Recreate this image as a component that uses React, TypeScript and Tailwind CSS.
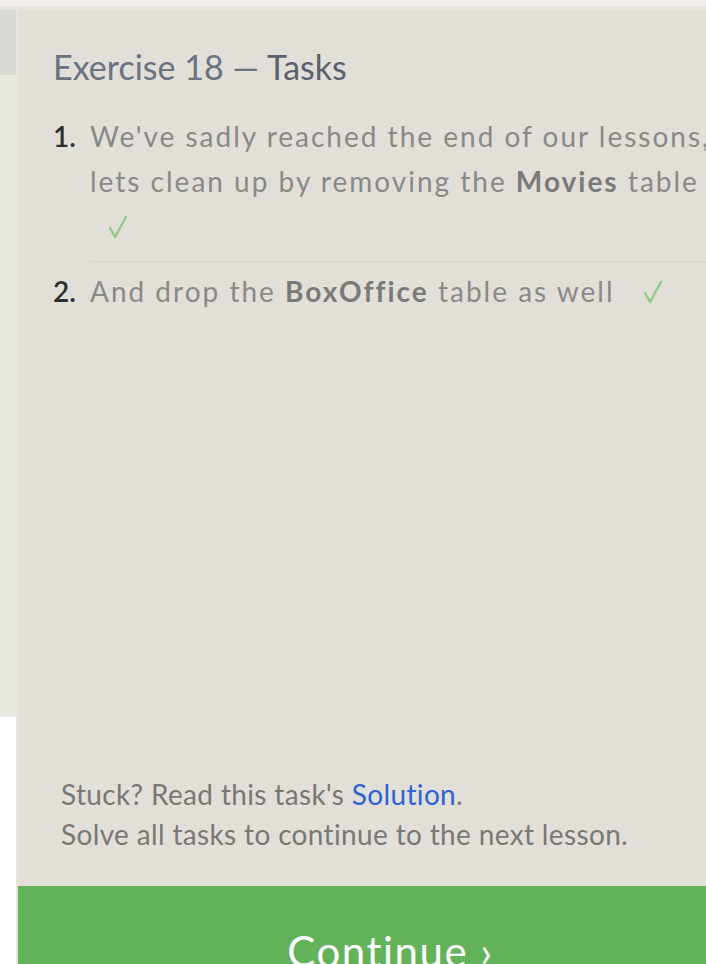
function Check({ className }: { className?: string }) {
  return (
    <svg viewBox="0 0 22 24" className={'inline-block w-[22px] h-[24px] ' + (className ?? '')}>
      <path d="M3 13 L8 22 L19 2" fill="none" stroke="#8fcb88" strokeWidth="2.4" strokeLinecap="round" strokeLinejoin="round" />
    </svg>
  );
}

export default function App() {
  const font = { fontFamily: 'Lato, "Open Sans", sans-serif' };
  return (
    <div className="w-[706px] h-[964px] overflow-hidden bg-[#efede7] flex flex-col" style={font}>
      <div className="h-[6px] shrink-0" />
      <div className="flex flex-1 border-t-4 border-[#e6e4dd]">
        <div className="w-[16px] shrink-0 flex flex-col">
          <div className="h-[65px] bg-[#d9d9d4]" />
          <div className="h-[642px] bg-[#e9e8e1]" />
          <div className="flex-1 bg-white" />
        </div>
        <div className="w-[747px] shrink-0 bg-[#e1dfd8] border-l-2 border-[#e6e5de] flex flex-col">
          <h1 className="pl-[35px] pt-[37px] text-[34px] leading-[40px] text-[#6b7281]">
            Exercise 18 — <span className="text-[#5b6170]">Tasks</span>
          </h1>
          <ol className="mt-[27px] pl-[35px] text-[28px] leading-[45px] tracking-[2px] text-[#8a8986]">
            <li className="flex pb-[12px]">
              <span className="w-[37px] shrink-0 text-[#2e2e2e] font-semibold tracking-normal">1.</span>
              <div className="flex-1 border-b border-[#d5d4ca] pb-[12px] -mb-[12px]">
                We've sadly reached the end of our lessons, lets clean up by removing the{' '}
                <b className="text-[#7b7a77]">Movies</b> table
                <br />
                <Check className="ml-[17px] align-[-2px]" />
              </div>
            </li>
            <li className="flex pt-[7px]">
              <span className="w-[37px] shrink-0 text-[#2e2e2e] font-semibold tracking-normal">2.</span>
              <div className="flex-1">
                And drop the <b className="text-[#7b7a77]">BoxOffice</b> table as well
                <Check className="ml-[27px] align-[-2px]" />
              </div>
            </li>
          </ol>
          <div className="mt-[460px] pl-[43px] text-[28px] leading-[40px] tracking-[0.35px] text-[#7b7773]">
            <p>
              Stuck? Read this task's <span className="text-[#2d63d6]">Solution</span>.
            </p>
            <p>Solve all tasks to continue to the next lesson.</p>
          </div>
          <div className="mt-[32px] h-[120px] bg-[#62b25a] text-white text-center text-[42px] tracking-[1.5px] pt-[40px] leading-[50px]">
            Continue ›
          </div>
        </div>
      </div>
    </div>
  );
}
